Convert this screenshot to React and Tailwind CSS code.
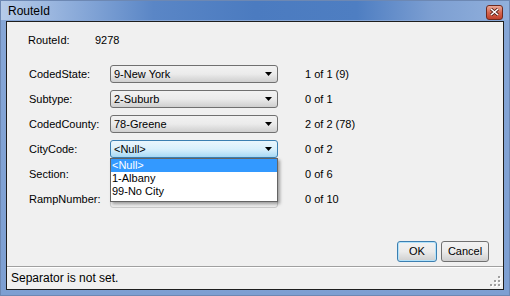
import { useState } from 'react';

const rows = [
  { label: 'CodedState:', value: '9-New York', count: '1 of 1 (9)' },
  { label: 'Subtype:', value: '2-Suburb', count: '0 of 1' },
  { label: 'CodedCounty:', value: '78-Greene', count: '2 of 2 (78)' },
  { label: 'CityCode:', value: '<Null>', count: '0 of 2', open: true },
  { label: 'Section:', value: '', count: '0 of 6' },
  { label: 'RampNumber:', value: '', count: '0 of 10' },
];

const cityOptions = ['<Null>', '1-Albany', '99-No City'];

const Arrow = () => (
  <svg width="8" height="5" viewBox="0 0 8 5" className="shrink-0">
    <path d="M0 0h7L3.5 4z" fill="#000" />
  </svg>
);

const Combo = ({ value, focused, open }) => {
  const [selected] = useState(0);
  return (
    <div className="relative w-[168px] h-[18px]">
      <div
        className={
          focused
            ? 'flex items-center h-full pl-[3px] pr-[4px] rounded-[3px] border border-[#3c7fb1] bg-gradient-to-b from-[#eaf6fd] via-[#d9f0fc] to-[#a7d9f5]'
            : 'flex items-center h-full pl-[3px] pr-[4px] rounded-[3px] border border-[#707070] bg-gradient-to-b from-[#f2f2f2] via-[#ebebeb] to-[#cfcfcf]'
        }
      >
        <span className="flex-1 text-[11px] leading-none text-black">{value}</span>
        <Arrow />
      </div>
      {/* open drop-down list */}
      {open && (
        <div className="absolute left-0 top-full w-[168px] z-10 bg-white border border-[#646464] shadow-[2px_2px_3px_rgba(0,0,0,0.35)] pb-[3px]">
          {cityOptions.map((opt, i) => (
            <div
              key={opt}
              className={
                i === selected
                  ? 'h-[13px] flex items-center px-[1px] text-[11px] leading-none bg-[#3399ff] text-white'
                  : 'h-[13px] flex items-center px-[1px] text-[11px] leading-none text-black'
              }
            >
              {opt}
            </div>
          ))}
        </div>
      )}
    </div>
  );
};

const Grip = () => (
  <svg width="11" height="11" viewBox="0 0 11 11">
    {[
      [8, 0],
      [4, 4],
      [8, 4],
      [0, 8],
      [4, 8],
      [8, 8],
    ].map(([x, y]) => (
      <g key={`${x}-${y}`}>
        <rect x={x + 1} y={y + 1} width="2" height="2" fill="#fff" />
        <rect x={x} y={y} width="2" height="2" fill="#a0a0a0" />
      </g>
    ))}
  </svg>
);

const App = () => {
  return (
    <div
      className="w-[510px] h-[296px] flex flex-col bg-gradient-to-b from-[#87a7d7] to-[#7d9fd2] border border-[#6d88b3] overflow-hidden"
      style={{ fontFamily: '"Liberation Sans", Arial, sans-serif' }}
    >
      {/* title bar */}
      <div className="h-[19px] flex items-center justify-between pl-[7px] pr-[6px] bg-[linear-gradient(90deg,#b6cbe8_0%,#9ab6df_10%,#5a86c6_30%,#4b7bc0_50%,#4e7ec2_70%,#7d9fd2_85%,#91b0dc_100%)]">
        <span className="text-[12px] text-black">RouteId</span>
        <div className="w-[17px] h-[15px] mt-[3px] rounded-[3px] border border-[#6e2a1f] bg-gradient-to-b from-[#e9a898] via-[#d6664f] to-[#c0402a] flex items-center justify-center">
          <svg width="9" height="8" viewBox="0 0 9 8">
            <path d="M1 1l7 6M8 1L1 7" stroke="#4a1a12" strokeWidth="3" />
            <path d="M1 1l7 6M8 1L1 7" stroke="#fff" strokeWidth="1.6" />
          </svg>
        </div>
      </div>

      {/* frame */}
      <div className="flex-1 px-[5px] pb-[5px] pt-px">
        <div className="h-full border border-[#1e1e1e] bg-[#f0f0f0] flex flex-col">
          <div className="flex-1 flex flex-col pl-[21px] pt-[10px]">
            <div className="flex items-center h-[16px] text-[11px] text-black">
              <span className="w-[67px]">RouteId:</span>
              <span>9278</span>
            </div>
            <div className="flex flex-col gap-[7px] mt-[17px]">
              {rows.map((r) => (
                <div key={r.label} className="flex items-center h-[18px] text-[11px] text-black">
                  <span className="w-[82px] pl-px">{r.label}</span>
                  {r.value || r.open ? (
                    <Combo value={r.value} focused={r.open} open={r.open} />
                  ) : (
                    <div className="w-[168px] h-[18px] rounded-[3px] border border-[#c9c9c9] bg-gradient-to-b from-[#f7f7f7] to-[#ececec]" />
                  )}
                  <span className="ml-[27px]">{r.count}</span>
                </div>
              ))}
            </div>
          </div>

          {/* buttons */}
          <div className="flex justify-end gap-[4px] pr-[14px] pb-[4px]">
            <button className="w-[40px] h-[21px] rounded-[3px] border border-[#3c7fb1] bg-gradient-to-b from-[#f2f2f2] via-[#ebebeb] to-[#cfcfcf] shadow-[inset_0_0_0_1px_#b3e2fa] text-[11px] text-black">
              OK
            </button>
            <button className="w-[48px] h-[21px] rounded-[3px] border border-[#707070] bg-gradient-to-b from-[#f2f2f2] via-[#ebebeb] to-[#cfcfcf] text-[11px] text-black">
              Cancel
            </button>
          </div>

          {/* status strip */}
          <div className="h-[23px] border-t border-[#a0a0a0] flex items-center justify-between pl-[4px] pr-[2px] shadow-[inset_0_1px_0_#fff]">
            <span className="text-[12px] text-black">Separator is not set.</span>
            <div className="self-end mb-[2px]">
              <Grip />
            </div>
          </div>
        </div>
      </div>
    </div>
  );
};

export default App;
